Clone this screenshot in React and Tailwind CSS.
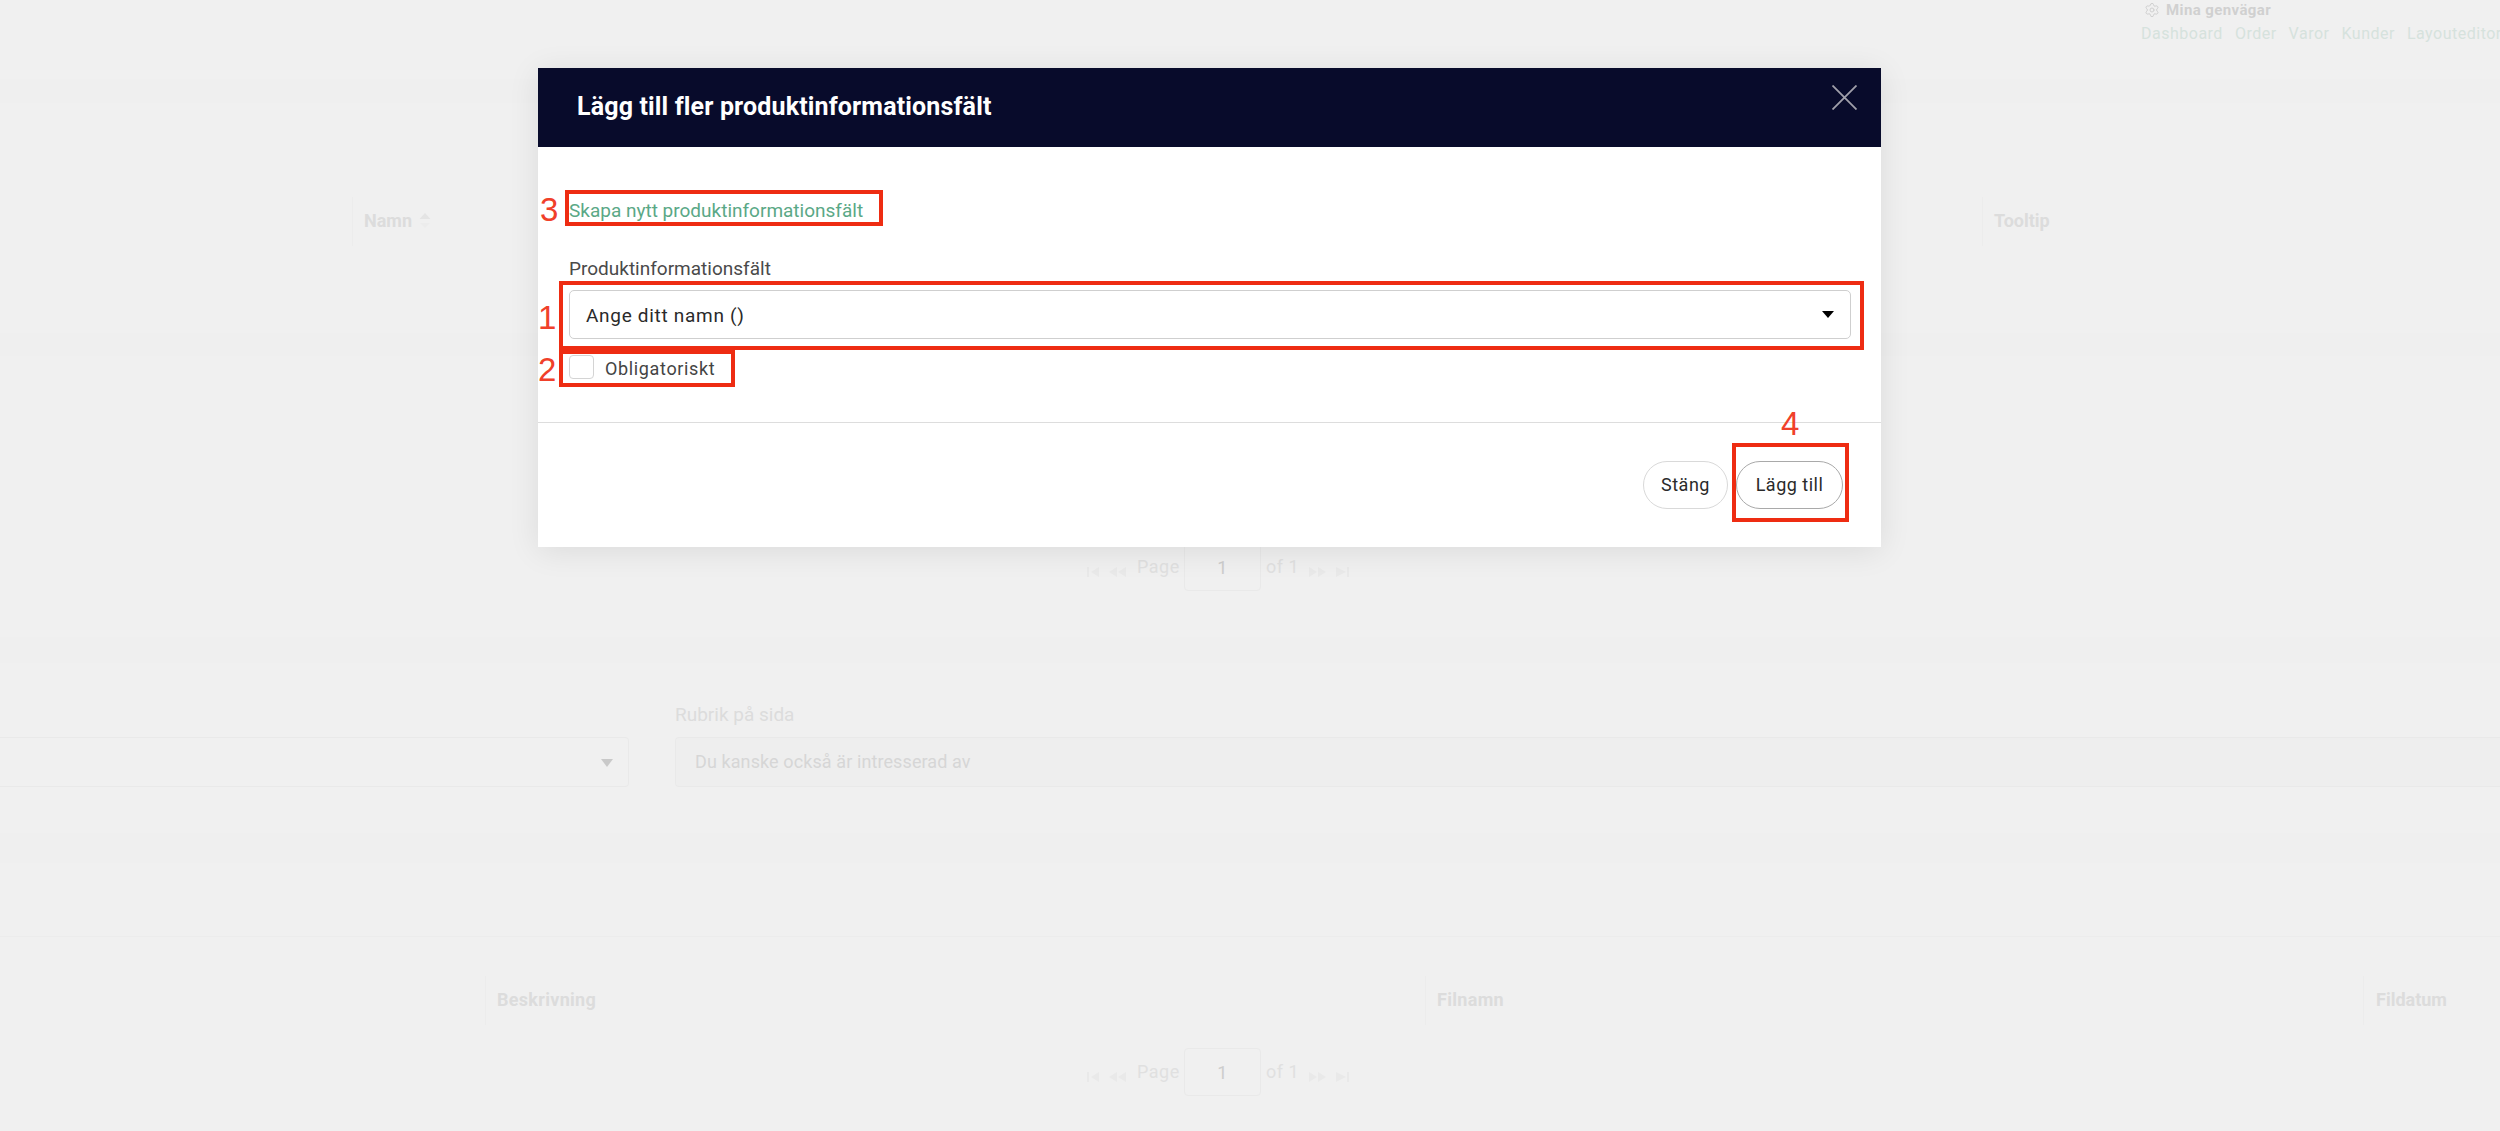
import React from 'react';
import { Settings } from 'lucide-react';

const font = "font-['Roboto',sans-serif]";

const Band = ({ className }) => <div className={`w-full bg-[#efefef] ${className}`} />;

const ColHead = ({ label, className = '', children }) => (
  <div className={`flex items-center h-[49px] border-l border-[#ececec] pl-[11px] shrink-0 text-[18px] font-bold text-[#dcdcdc] ${className}`}>
    <span className="mb-[2px]">{label}</span>
    {children}
  </div>
);

const PagerIcon = ({ d }) => (
  <svg width="18" height="10" viewBox="0 0 18 10" className="fill-[#e9e9e9] mt-[10px]">
    <path d={d} />
  </svg>
);

const Pager = ({ className = '' }) => (
  <div className={`flex items-center pl-[1086px] h-[48px] text-[18px] text-[#e0e0e0] tracking-[0.5px] ${className}`}>
    <PagerIcon d="M1 0h2v10H1zM13 0v10L5 5z" />
    <div className="w-[5px]" />
    <PagerIcon d="M8 0v10L0 5zM17 0v10L9 5z" />
    <span className="ml-[10px] w-[47px] mb-[2px]">Page</span>
    <div className="w-[77px] h-[48px] border border-[#e9e9e9] rounded-[4px] flex items-center justify-center text-[#cdcdcd]">1</div>
    <span className="ml-[5px] w-[43px] mb-[2px]">of 1</span>
    <PagerIcon d="M0 0v10l8-5zM9 0v10l8-5z" />
    <div className="w-[8px]" />
    <PagerIcon d="M1 0v10l10-5zM12 0h2v10h-2z" />
  </div>
);

const RedBox = ({ className }) => (
  <div className={`absolute border-[4px] border-[#ee2c12] pointer-events-none ${className}`} />
);

const Num = ({ className, children }) => (
  <span className={`absolute font-['Liberation_Sans',sans-serif] text-[33px] leading-[33px] text-[#f0402a] ${className}`}>{children}</span>
);

const Modal = () => (
  <div className="absolute left-[538px] top-[68px] w-[1343px] h-[479px] bg-white flex flex-col shadow-[0_4px_30px_rgba(0,0,0,0.09)]">
    <div className="h-[79px] bg-[#080b2b] flex items-center justify-between pl-[39px] pr-[24px] shrink-0">
      <h2 className="text-[25px] font-bold tracking-[0.15px] text-white mb-[2px]">Lägg till fler produktinformationsfält</h2>
      <svg width="25" height="25" viewBox="0 0 25 25" className="self-start mt-[17px] stroke-[#a0a0aa]" strokeWidth="1.8">
        <path d="M0.5 0.5l24 24M24.5 0.5l-24 24" />
      </svg>
    </div>

    <div className="flex-1 pl-[31px] pr-[30px] pt-[52px]">
      <a className="block h-[24px] leading-[24px] text-[19px] text-[#5aa886]">Skapa nytt produktinformationsfält</a>
      <label className="block mt-[34px] h-[24px] leading-[24px] text-[19px] text-[#4a4a4a]">Produktinformationsfält</label>
      <div className="mt-[9px] h-[49px] border border-[#cfcfcf] rounded-[5px] flex items-center justify-between pl-[16px] pr-[16px] text-[19px] tracking-[0.7px] text-[#2a2a2a]">
        <span className="pt-[3px]">Ange ditt namn ()</span>
        <svg width="12" height="7" viewBox="0 0 12 7" className="fill-black mt-[-1px]">
          <path d="M0 0h12L6 7z" />
        </svg>
      </div>
      <div className="mt-[16px] flex items-center h-[24px]">
        <div className="w-[25px] h-[24px] border border-[#d4d4d4] rounded-[4px]" />
        <span className="ml-[11px] pt-[2px] text-[18px] tracking-[0.65px] text-[#444444]">Obligatoriskt</span>
      </div>
    </div>

    <div className="h-[125px] border-t border-[#dddddd] flex justify-end gap-[8px] pt-[38px] pr-[38px] shrink-0">
      <button className="w-[85px] h-[48px] pb-[2px] rounded-full border border-[#d9d9d9] text-[18px] tracking-[0.5px] text-[#2a2a2a]">Stäng</button>
      <button className="w-[107px] h-[48px] pb-[2px] rounded-full border border-[#a9a9a9] text-[18px] tracking-[0.5px] text-[#2a2a2a]">Lägg till</button>
    </div>

    <RedBox className="left-[27px] top-[122px] w-[318px] h-[36px]" />
    <RedBox className="left-[21px] top-[213px] w-[1305px] h-[69px]" />
    <RedBox className="left-[21px] top-[282px] w-[176px] h-[37px]" />
    <RedBox className="left-[1194px] top-[375px] w-[117px] h-[79px]" />
    <Num className="left-[2px] top-[125px]">3</Num>
    <Num className="left-[0px] top-[233px]">1</Num>
    <Num className="left-[0px] top-[285px]">2</Num>
    <Num className="left-[1243px] top-[339px]">4</Num>
  </div>
);

export default function App() {
  return (
    <div className={`relative h-[1131px] overflow-hidden bg-[#f0f0f0] ${font}`}>
      {/* top bar */}
      <div className="h-[79px] pl-[2141px] whitespace-nowrap">
        <div className="flex items-center h-[20px] pl-[3px] text-[15px] font-bold tracking-[0.4px] text-[#d0d0d0]">
          <Settings size={16} strokeWidth={1.5} className="mr-[6px]" />
          Mina genvägar
        </div>
        <div className="flex gap-[12px] mt-[3px] text-[16px] tracking-[0.5px] leading-[22px] text-[#d6e2dd]">
          <span>Dashboard</span>
          <span>Order</span>
          <span>Varor</span>
          <span>Kunder</span>
          <span>Layouteditor</span>
        </div>
      </div>
      <Band className="h-[24px]" />

      {/* first table */}
      <div className="h-[230px] pt-[94px] flex">
        <div className="w-[352px] shrink-0" />
        <ColHead label="Namn" className="w-[1630px]">
          <svg width="12" height="16" viewBox="0 0 12 16" className="ml-[7px] mb-[2px]">
            <path d="M6 0l5.5 6H.5z" className="fill-[#e4e4e4]" />
            <path d="M6 15l5-5H1z" className="fill-[#ececec]" />
          </svg>
        </ColHead>
        <ColHead label="Tooltip" className="w-[300px]" />
      </div>
      <Band className="h-[23px]" />
      <div className="h-[281px] pt-[187px]">
        <Pager />
      </div>
      <Band className="h-[26px]" />

      {/* related products */}
      <div className="h-[170px] pt-[74px] flex">
        <div className="w-[629px] h-[50px] shrink-0 border border-l-0 border-[#e9e9e9] rounded-r-[4px] flex items-center justify-end pr-[15px]">
          <svg width="12" height="8" viewBox="0 0 12 8" className="fill-[#c9c9c9] mt-[2px]">
            <path d="M0 0h12L6 8z" />
          </svg>
        </div>
        <div className="ml-[46px] flex-1 relative">
          <label className="absolute top-[-34px] left-0 text-[19px] leading-[24px] text-[#dcdcdc]">Rubrik på sida</label>
          <div className="h-[50px] border border-[#e9e9e9] border-r-0 rounded-l-[4px] bg-[#eeeeee] flex items-center pl-[19px] pb-[2px] text-[18px] tracking-[0.1px] text-[#d6d6d6]">
            Du kanske också är intresserad av
          </div>
        </div>
      </div>
      <Band className="h-[30px]" />

      {/* files */}
      <div className="h-[74px] border-b border-[#ececec]" />
      <div className="pt-[39px] flex whitespace-nowrap">
        <div className="w-[485px] shrink-0" />
        <ColHead label="Beskrivning" className="w-[940px] tracking-[0.3px]" />
        <ColHead label="Filnamn" className="w-[938px] tracking-[0.3px]" />
        <ColHead label="Fildatum" className="w-[137px] pl-[12px]" />
      </div>
      <Pager className="mt-[23px]" />

      <Modal />
    </div>
  );
}
